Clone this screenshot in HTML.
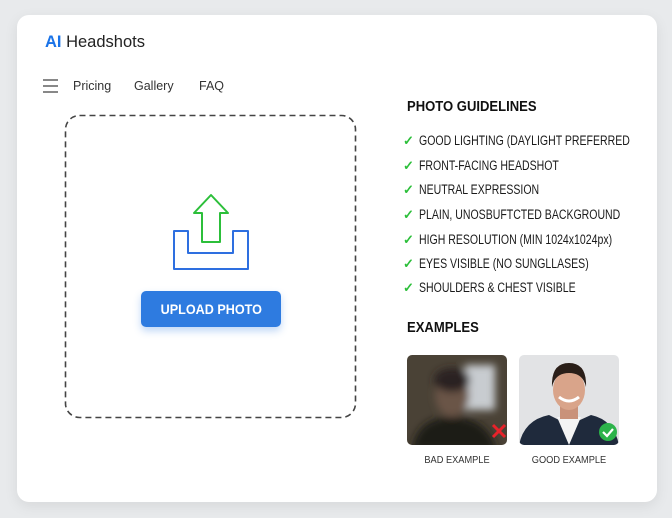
<!DOCTYPE html>
<html><head><meta charset="utf-8"><style>
*{margin:0;padding:0;box-sizing:border-box}
body{width:672px;height:518px;background:#e8eaec;font-family:"Liberation Sans",sans-serif;position:relative;overflow:hidden}
.card{position:absolute;left:17px;top:15px;width:640px;height:487px;background:#fff;border-radius:12px;box-shadow:0 4px 14px rgba(0,0,0,.08)}
.abs{position:absolute;white-space:nowrap}
.logo{left:45px;top:33px;font-size:16.5px;color:#222}
.logo b{color:#1a73e8;font-weight:bold}
.nav{top:79px;font-size:12.5px;color:#333}
.btn{position:absolute;left:141px;top:291px;width:140px;height:36px;background:#2e7be0;border-radius:5px;color:#fff;font-weight:bold;font-size:14px;text-align:center;line-height:36px;box-shadow:0 4px 8px rgba(46,123,224,.3)}
.btn span{display:inline-block;transform:scaleX(.9)}
.h{font-weight:bold;font-size:14.5px;color:#111;transform:scaleX(.9);transform-origin:left}
.g{left:403px;font-size:13.5px;color:#1a1a1a}
.g span{display:inline-block;transform:scaleX(.78);transform-origin:left;margin-left:16px}
.g i{position:absolute;left:0;top:0;color:#2cbf3a;font-style:normal;font-weight:bold;font-size:13px}
.cap{font-size:10.5px;color:#333;transform:scaleX(.88);transform-origin:center;text-align:center;width:100px}
</style></head><body>
<div class="card"></div>
<div class="abs logo"><b>AI</b> Headshots</div>
<div class="abs" style="left:43px;top:79px;width:15px">
<div style="height:2px;background:#888;margin-bottom:4px"></div><div style="height:2px;background:#888;margin-bottom:4px"></div><div style="height:2px;background:#888"></div></div>
<div class="abs nav" style="left:73px">Pricing</div>
<div class="abs nav" style="left:134px">Gallery</div>
<div class="abs nav" style="left:199px">FAQ</div>
<svg class="abs" style="left:0;top:0" width="672" height="518">
<rect x="65.5" y="115.5" width="290" height="302" rx="14" fill="none" stroke="#444" stroke-width="1.6" stroke-dasharray="6 4"/>
<path d="M174 231h14v22h45v-22h15v38h-74z" fill="none" stroke="#2e6fe0" stroke-width="2" stroke-linejoin="round"/>
<path d="M211 195l17 18h-8v29h-18v-29h-8z" fill="none" stroke="#2cbf3a" stroke-width="2" stroke-linejoin="round"/>
</svg>
<div class="btn"><span>UPLOAD PHOTO</span></div>
<div class="abs h" style="left:407px;top:99px">PHOTO GUIDELINES</div>
<div class="abs g" style="top:133px"><i>✓</i><span>GOOD LIGHTING (DAYLIGHT PREFERRED</span></div>
<div class="abs g" style="top:158px"><i>✓</i><span>FRONT-FACING HEADSHOT</span></div>
<div class="abs g" style="top:182px"><i>✓</i><span>NEUTRAL EXPRESSION</span></div>
<div class="abs g" style="top:207px"><i>✓</i><span>PLAIN, UNOSBUFTCTED BACKGROUND</span></div>
<div class="abs g" style="top:232px"><i>✓</i><span>HIGH RESOLUTION (MIN 1024x1024px)</span></div>
<div class="abs g" style="top:256px"><i>✓</i><span>EYES VISIBLE (NO SUNGLLASES)</span></div>
<div class="abs g" style="top:280px"><i>✓</i><span>SHOULDERS &amp; CHEST VISIBLE</span></div>
<div class="abs h" style="left:407px;top:320px">EXAMPLES</div>
<svg class="abs" style="left:407px;top:355px" width="100" height="90">
<defs><filter id="bl"><feGaussianBlur stdDeviation="4"/></filter><clipPath id="c1"><rect width="100" height="90" rx="5"/></clipPath></defs>
<g clip-path="url(#c1)"><rect width="100" height="90" fill="#4a4236"/>
<g filter="url(#bl)"><rect x="58" y="10" width="30" height="45" fill="#c8ccd0"/><ellipse cx="45" cy="40" rx="17" ry="22" fill="#6b5446"/><ellipse cx="45" cy="25" rx="18" ry="12" fill="#2a2320"/><path d="M5 95 Q10 62 45 62 Q80 62 90 95z" fill="#1e1b19"/></g></g>
<path d="M86 70l12 12M98 70l-12 12" stroke="#e8222a" stroke-width="3"/>
</svg>
<svg class="abs" style="left:519px;top:355px" width="100" height="90">
<defs><clipPath id="c2"><rect width="100" height="90" rx="5"/></clipPath></defs>
<g clip-path="url(#c2)"><rect width="100" height="90" fill="#e2e3e5"/>
<path d="M0 90 Q5 65 30 60 L50 70 L72 60 Q95 65 100 90z" fill="#1f2a3c"/>
<path d="M38 62 L50 90 L62 62z" fill="#f4f4f4"/>
<rect x="41" y="48" width="18" height="16" fill="#c9927a"/>
<ellipse cx="50" cy="35" rx="16" ry="20" fill="#d9a48a"/>
<path d="M33 32 Q32 8 50 8 Q68 8 67 32 Q64 18 50 18 Q36 18 33 32z" fill="#2a1e18"/>
<path d="M40 42 Q50 50 60 42" stroke="#fff" stroke-width="3" fill="none"/></g>
<circle cx="89" cy="77" r="9" fill="#2cb34a"/><path d="M84 77l4 4 6-7" stroke="#fff" stroke-width="2.2" fill="none"/>
</svg>
<div class="abs cap" style="left:407px;top:454px">BAD EXAMPLE</div>
<div class="abs cap" style="left:519px;top:454px">GOOD EXAMPLE</div>
</body></html>
